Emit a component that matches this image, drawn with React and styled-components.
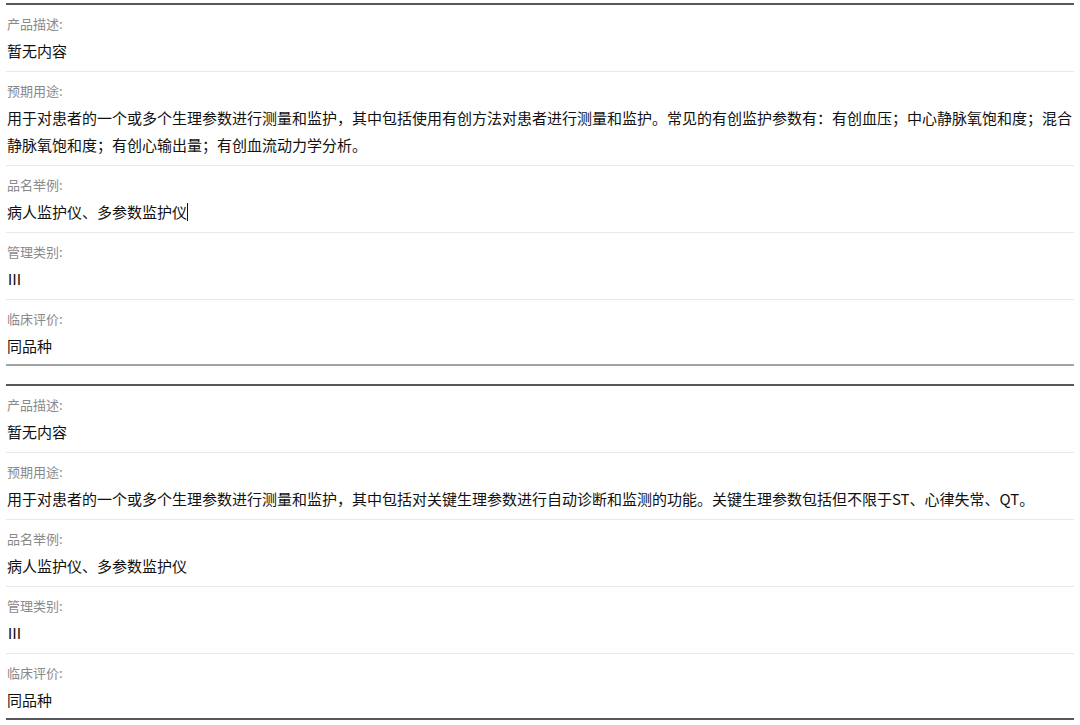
import React from 'react'
import styled, { createGlobalStyle } from 'styled-components'

const GlobalStyle = createGlobalStyle`
  html, body {
    margin: 0;
    padding: 0;
    background: #fff;
  }
  body {
    font-family: "Noto Sans CJK SC", "Liberation Sans", sans-serif;
  }
`

const products = [
  {
    rows: [
      { label: '产品描述:', value: '暂无内容' },
      {
        label: '预期用途:',
        value:
          '用于对患者的一个或多个生理参数进行测量和监护，其中包括使用有创方法对患者进行测量和监护。常见的有创监护参数有：有创血压；中心静脉氧饱和度；混合静脉氧饱和度；有创心输出量；有创血流动力学分析。',
      },
      { label: '品名举例:', value: '病人监护仪、多参数监护仪', caret: true },
      { label: '管理类别:', value: 'Ⅲ' },
      { label: '临床评价:', value: '同品种' },
    ],
    bottom: '#a3a3a3',
  },
  {
    rows: [
      { label: '产品描述:', value: '暂无内容' },
      {
        label: '预期用途:',
        value:
          '用于对患者的一个或多个生理参数进行测量和监护，其中包括对关键生理参数进行自动诊断和监测的功能。关键生理参数包括但不限于ST、心律失常、QT。',
      },
      { label: '品名举例:', value: '病人监护仪、多参数监护仪' },
      { label: '管理类别:', value: 'Ⅲ' },
      { label: '临床评价:', value: '同品种' },
    ],
    bottom: '#55585c',
  },
]

function App() {
  return (
    <>
      <GlobalStyle />
      <Page>
        {products.map((product, i) => (
          <Card key={i} $bottom={product.bottom}>
            {product.rows.map((row, j) => (
              <Row key={j}>
                <Label>{row.label}</Label>
                <Value>
                  {row.value}
                  {row.caret && <Caret />}
                </Value>
              </Row>
            ))}
          </Card>
        ))}
      </Page>
    </>
  )
}

const Page = styled.div`
  display: flex;
  flex-direction: column;
  gap: 18px;
  padding: 3px 6px 0;
`

const Card = styled.div`
  border-top: 2px solid #55585c;
  > div:last-child {
    padding-bottom: 5px;
    border-bottom: 2px solid ${(p) => p.$bottom};
  }
`

const Row = styled.div`
  padding: 9px 1px 7px;
  border-bottom: 1px solid #e9e9e9;
`

const Label = styled.div`
  font-size: 13px;
  line-height: 20px;
  color: #8a8a8a;
  margin-bottom: 3px;
`

const Value = styled.div`
  font-size: 15px;
  line-height: 27px;
  color: #111;
`

const Caret = styled.span`
  display: inline-block;
  width: 1px;
  height: 18px;
  background: #111;
  vertical-align: -3px;
`

export default App
